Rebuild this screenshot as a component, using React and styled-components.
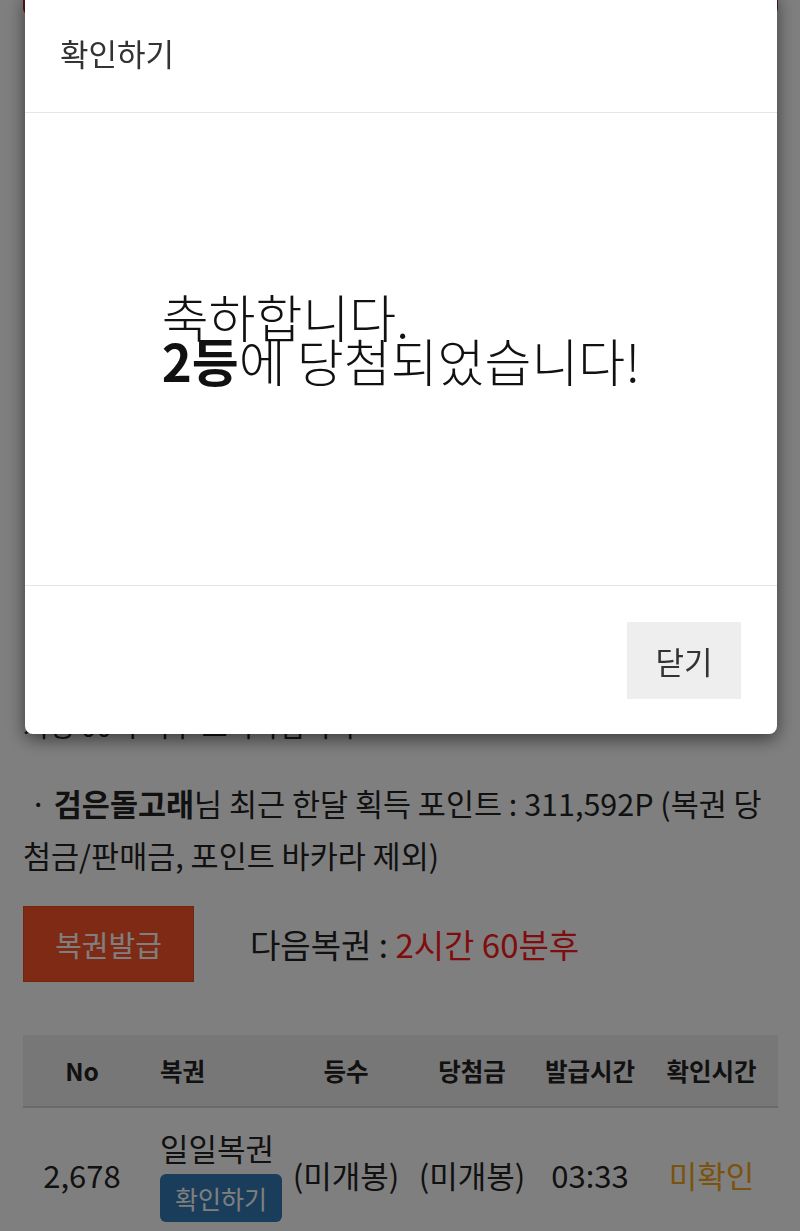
import React from 'react';
import styled, { createGlobalStyle } from 'styled-components';

const GlobalStyle = createGlobalStyle`
  html, body {
    margin: 0;
    padding: 0;
    background: #fff;
  }
  body {
    font-family: "Noto Sans CJK KR", "Noto Sans", sans-serif;
    color: #222;
    overflow: hidden;
  }
`;

const Page = styled.div`
  padding: 0 22px 0 23px;
  height: 1231px;
  overflow: hidden;
`;

const NoticeBox = styled.div`
  height: 16px;
  border: 2px solid #b8283a;
  border-top: none;
  border-radius: 0 0 8px 8px;
  box-sizing: border-box;
`;

const NoticeList = styled.ul`
  list-style: none;
  margin: 0;
  padding: 7px 0 0;
`;

const NoticeLine = styled.li`
  font-size: 28px;
  line-height: 52px;
  height: 52px;
  white-space: nowrap;
  overflow: hidden;
`;

const Summary = styled.p`
  margin: 26px 0 0;
  font-size: 30.5px;
  line-height: 52px;
  color: #222;
  word-break: break-all;
`;

const Strong = styled.b`
  font-weight: 700;
`;

const ActionRow = styled.div`
  display: flex;
  align-items: center;
  gap: 56px;
  margin-top: 25px;
`;

const IssueButton = styled.button`
  width: 171px;
  height: 76px;
  border: 1px solid #e04a22;
  background: #ff5428;
  color: #fff;
  font-family: inherit;
  font-size: 29px;
  padding: 0;
`;

const NextInfo = styled.div`
  font-size: 33px;
  color: #222;
`;

const Red = styled.span`
  color: #ff1a1a;
`;

const Table = styled.div`
  margin-top: 53px;
  width: 755px;
`;

const Row = styled.div`
  display: grid;
  grid-template-columns: 118px 142px 126px 126px 110px 133px;
  align-items: center;
`;

const HeadRow = styled(Row)`
  height: 71px;
  background: #eeeeee;
  border-bottom: 2px solid #d4d4d4;
`;

const BodyRow = styled(Row)`
  padding: 20px 0 10px;
`;

const Th = styled.div`
  font-size: 24.5px;
  font-weight: 700;
  text-align: ${(p) => (p.$left ? 'left' : 'center')};
  padding-left: ${(p) => (p.$left ? '19px' : '0')};
  white-space: nowrap;
`;

const Td = styled.div`
  font-size: 31px;
  line-height: 40px;
  text-align: ${(p) => (p.$left ? 'left' : 'center')};
  padding-left: ${(p) => (p.$left ? '19px' : '0')};
  color: ${(p) => p.$color || '#222'};
  white-space: nowrap;
`;

const CheckButton = styled.button`
  display: block;
  margin-top: 6px;
  width: 122px;
  height: 48px;
  border: none;
  border-radius: 6px;
  background: #337ab7;
  color: #fff;
  font-family: inherit;
  font-size: 25px;
  padding: 0;
`;

const Backdrop = styled.div`
  position: fixed;
  inset: 0;
  background: rgba(0, 0, 0, 0.5);
`;

const Modal = styled.div`
  position: fixed;
  top: -8px;
  left: 25px;
  width: 752px;
  background: #fff;
  border-radius: 8px;
  box-shadow: 0 5px 18px rgba(0, 0, 0, 0.55);
  display: flex;
  flex-direction: column;
`;

const ModalHeader = styled.div`
  height: 120px;
  padding: 0 35px;
  display: flex;
  align-items: center;
  border-bottom: 1px solid #e5e5e5;
`;

const ModalTitle = styled.h4`
  margin: 0;
  font-size: 31px;
  font-weight: 400;
  color: #333;
`;

const ModalBody = styled.div`
  height: 472px;
  display: flex;
  align-items: center;
  justify-content: center;
  padding-bottom: 22px;
  box-sizing: border-box;
`;

const Message = styled.div`
  font-size: 51px;
  line-height: 44px;
  font-weight: 300;
  color: #111;
  text-align: left;
`;

const ModalFooter = styled.div`
  height: 148px;
  border-top: 1px solid #e5e5e5;
  display: flex;
  align-items: center;
  justify-content: flex-end;
  padding: 0 36px;
`;

const CloseButton = styled.button`
  width: 114px;
  height: 77px;
  border: none;
  background: #eeeeee;
  color: #333;
  font-family: inherit;
  font-size: 31px;
  padding: 0;
`;

const notices = [
  '· 복권은 매시간 1장씩 발급받을 수 있습니다.',
  '· 발급된 복권은 확인하기를 눌러 개봉합니다.',
  '· 1등 당첨금 : 100,000P',
  '· 2등 당첨금 : 50,000P',
  '· 3등 당첨금 : 10,000P',
  '· 4등 당첨금 : 5,000P',
  '· 5등 당첨금 : 1,000P',
  '· 미개봉 복권은 당일 자정에 소멸됩니다.',
  '· 당첨금은 즉시 포인트로 지급됩니다.',
  '· 부정 이용 시 당첨이 취소될 수 있습니다.',
  '· 복권 발급 내역은 아래에서 확인하세요.',
  '· 판매금은 포인트 바카라에 적립됩니다.',
  '· 발급 시간은 서버 시간 기준입니다.',
  '지정 00시 이후 초기화됩니다',
];

export default function App() {
  return (
    <>
      <GlobalStyle />
      <Page>
        <NoticeBox />
        <NoticeList>
          {notices.map((n) => (
            <NoticeLine key={n}>{n}</NoticeLine>
          ))}
        </NoticeList>
        <Summary>
          &nbsp;· <Strong>검은돌고래</Strong>님 최근 한달 획득 포인트 : 311,592P (복권 당첨금/판매금, 포인트 바카라 제외)
        </Summary>
        <ActionRow>
          <IssueButton>복권발급</IssueButton>
          <NextInfo>
            다음복권 : <Red>2시간 60분후</Red>
          </NextInfo>
        </ActionRow>
        <Table>
          <HeadRow>
            <Th>No</Th>
            <Th $left>복권</Th>
            <Th>등수</Th>
            <Th>당첨금</Th>
            <Th>발급시간</Th>
            <Th>확인시간</Th>
          </HeadRow>
          <BodyRow>
            <Td>2,678</Td>
            <Td $left>
              일일복권
              <CheckButton>확인하기</CheckButton>
            </Td>
            <Td>(미개봉)</Td>
            <Td>(미개봉)</Td>
            <Td>03:33</Td>
            <Td $color="#f5a623">미확인</Td>
          </BodyRow>
        </Table>
      </Page>
      <Backdrop />
      <Modal>
        <ModalHeader>
          <ModalTitle>확인하기</ModalTitle>
        </ModalHeader>
        <ModalBody>
          <Message>
            축하합니다.
            <br />
            <Strong>2등</Strong>에 당첨되었습니다!
          </Message>
        </ModalBody>
        <ModalFooter>
          <CloseButton>닫기</CloseButton>
        </ModalFooter>
      </Modal>
    </>
  );
}
